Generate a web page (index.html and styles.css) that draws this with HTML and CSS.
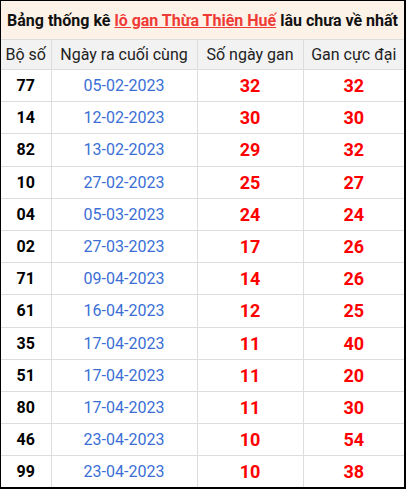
FILE: index.html
```html
<!DOCTYPE html>
<html lang="vi">
<head>
<meta charset="utf-8">
<link rel="stylesheet" href="styles.css">
</head>
<body>
<div class="frame">
<table class="gan">
<colgroup><col class="c1"><col class="c2"><col class="c3"><col class="c4"></colgroup>
<tr class="cap"><td colspan="4">Bảng thống kê <a href="#">lô gan Thừa Thiên Huế</a> lâu chưa về nhất</td></tr>
<tr class="head"><td>Bộ số</td><td>Ngày ra cuối cùng</td><td>Số ngày gan</td><td>Gan cực đại</td></tr>
<tr><td class="num">77</td><td class="date">05-02-2023</td><td class="red">32</td><td class="red">32</td></tr>
<tr><td class="num">14</td><td class="date">12-02-2023</td><td class="red">30</td><td class="red">30</td></tr>
<tr><td class="num">82</td><td class="date">13-02-2023</td><td class="red">29</td><td class="red">32</td></tr>
<tr><td class="num">10</td><td class="date">27-02-2023</td><td class="red">25</td><td class="red">27</td></tr>
<tr><td class="num">04</td><td class="date">05-03-2023</td><td class="red">24</td><td class="red">24</td></tr>
<tr><td class="num">02</td><td class="date">27-03-2023</td><td class="red">17</td><td class="red">26</td></tr>
<tr><td class="num">71</td><td class="date">09-04-2023</td><td class="red">14</td><td class="red">26</td></tr>
<tr><td class="num">61</td><td class="date">16-04-2023</td><td class="red">12</td><td class="red">25</td></tr>
<tr><td class="num">35</td><td class="date">17-04-2023</td><td class="red">11</td><td class="red">40</td></tr>
<tr><td class="num">51</td><td class="date">17-04-2023</td><td class="red">11</td><td class="red">20</td></tr>
<tr><td class="num">80</td><td class="date">17-04-2023</td><td class="red">11</td><td class="red">30</td></tr>
<tr><td class="num">46</td><td class="date">23-04-2023</td><td class="red">10</td><td class="red">54</td></tr>
<tr><td class="num">99</td><td class="date">23-04-2023</td><td class="red">10</td><td class="red">38</td></tr>
</table>
</div>
</body>
</html>
```

FILE: styles.css
```css
html, body {
  margin: 0;
  padding: 0;
  background: #fff;
}
.frame {
  width: 406px;
  height: 489px;
  box-sizing: border-box;
  border-left: 1px solid #000;
  border-top: 1px solid #000;
  border-right: 2px solid #000;
  border-bottom: 2px solid #000;
  overflow: hidden;
}
.gan {
  width: 100%;
  border-collapse: collapse;
  table-layout: fixed;
  font-family: Roboto, "Noto Sans", sans-serif;
  color: #111;
}
.c1 { width: 50px; }
.c2 { width: 146px; }
.c3 { width: 106px; }
.gan td {
  border: 1px solid #ddd;
  text-align: center;
  padding: 0;
  height: 31.2px;
  white-space: nowrap;
}
.gan tr:first-child td { border-top: none; }
.gan tr td:first-child { border-left: none; }
.gan tr td:last-child { border-right: none; }
.cap td {
  background: #fdf2e8;
  height: 38px;
  font-weight: bold;
  font-size: 16px;
  color: #111;
}
.cap a {
  color: #ef3b36;
  text-decoration: underline;
}
.head td {
  background: #f2f2f2;
  height: 29px;
  font-size: 16px;
  color: #222;
}
.num {
  font-weight: bold;
  font-size: 16px;
  color: #000;
}
.date {
  font-size: 16px;
  color: #3b6fd6;
}
.red {
  font-weight: bold;
  font-size: 18px;
  color: #ff0000;
}
```
